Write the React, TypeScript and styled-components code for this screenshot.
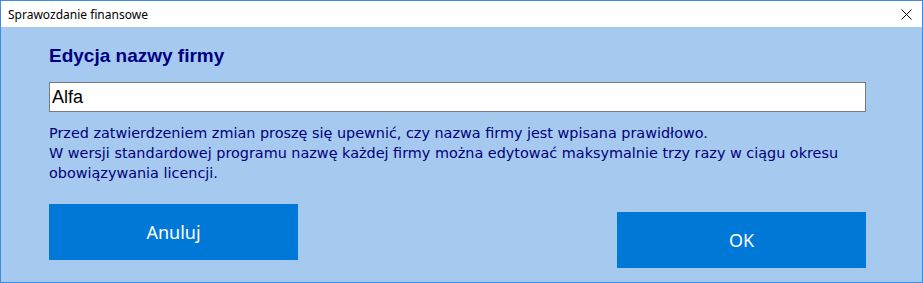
import styled, { createGlobalStyle } from "styled-components";

const GlobalStyle = createGlobalStyle`
  html, body {
    margin: 0;
    padding: 0;
    background: #ffffff;
  }
`;

const Window = styled.div`
  box-sizing: border-box;
  width: 923px;
  height: 283px;
  display: flex;
  flex-direction: column;
  border: 1px solid #3f8ae2;
  background-color: #a6c9f0;
`;

const TitleBar = styled.div`
  height: 26px;
  display: flex;
  align-items: center;
  justify-content: space-between;
  background-color: #ffffff;
  padding-left: 7px;
  font-family: "Noto Sans", "Open Sans", sans-serif;
  font-size: 12px;
  color: #000000;
`;

const CloseButton = styled.div`
  width: 31px;
  height: 26px;
  display: flex;
  align-items: center;
  justify-content: center;
`;

const Body = styled.div`
  flex: 1;
  display: flex;
  flex-direction: column;
  padding: 16px 56px 0 48px;
`;

const Heading = styled.h1`
  margin: 0;
  font-family: "Liberation Sans", Arial, sans-serif;
  font-size: 19px;
  font-weight: bold;
  color: #000080;
  line-height: 26px;
`;

const NameInput = styled.input`
  box-sizing: border-box;
  margin-top: 13px;
  width: 817px;
  height: 30px;
  border: 1px solid #7a7a7a;
  padding: 0 2px;
  font-family: "Liberation Sans", Arial, sans-serif;
  font-size: 18px;
  color: #000000;
  outline: none;
`;

const Notice = styled.p`
  margin: 11px 0 0 0;
  font-family: "DejaVu Sans", Tahoma, sans-serif;
  font-size: 14.4px;
  line-height: 20px;
  color: #00007a;
`;

const ButtonRow = styled.div`
  display: flex;
  justify-content: space-between;
  align-items: flex-start;
  margin-top: 21px;
  width: 817px;
`;

const ActionButton = styled.button<{ $offset?: number }>`
  width: 249px;
  height: 56px;
  margin-top: ${(p) => p.$offset ?? 0}px;
  border: none;
  background-color: #0078d7;
  color: #ffffff;
  font-family: "Noto Sans", "Open Sans", sans-serif;
  font-size: 18px;
  cursor: pointer;
`;

export default function App() {
  return (
    <>
      <GlobalStyle />
      <Window>
        <TitleBar>
          <span>Sprawozdanie finansowe</span>
          <CloseButton>
            <svg width="11" height="11" viewBox="0 0 11 11">
              <path d="M0.5 0.5 L10.5 10.5 M10.5 0.5 L0.5 10.5" stroke="#000" strokeWidth="1" />
            </svg>
          </CloseButton>
        </TitleBar>
        <Body>
          <Heading>Edycja nazwy firmy</Heading>
          <NameInput defaultValue="Alfa" />
          <Notice>
            Przed zatwierdzeniem zmian proszę się upewnić, czy nazwa firmy jest wpisana prawidłowo.
            <br />
            W wersji standardowej programu nazwę każdej firmy można edytować maksymalnie trzy razy w ciągu okresu
            <br />
            obowiązywania licencji.
          </Notice>
          <ButtonRow>
            <ActionButton>Anuluj</ActionButton>
            <ActionButton $offset={8}>OK</ActionButton>
          </ButtonRow>
        </Body>
      </Window>
    </>
  );
}
